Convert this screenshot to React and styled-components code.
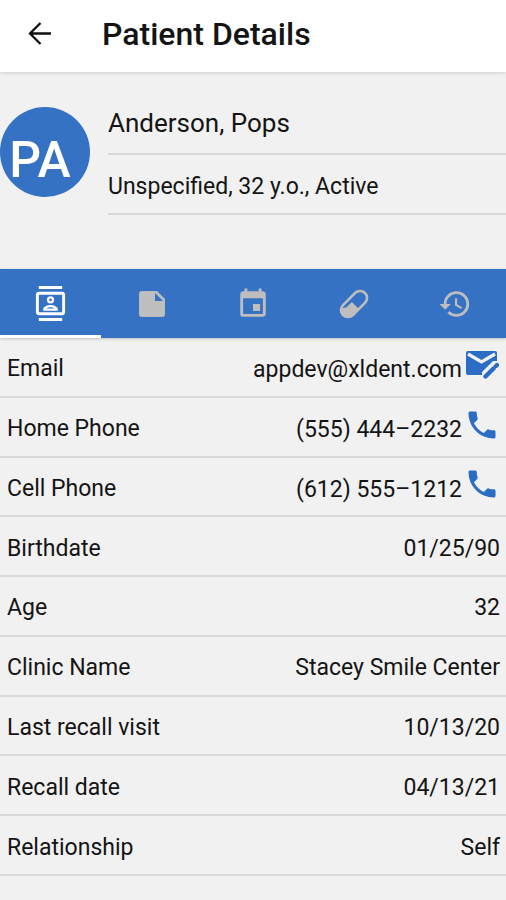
import React from 'react';
import styled, { createGlobalStyle } from 'styled-components';
import { MdOutlineContacts, MdEvent, MdHistory, MdPhone } from 'react-icons/md';

const GlobalStyle = createGlobalStyle`
  * { box-sizing: border-box; }
  body { margin: 0; background: #f1f1f1; color: #141414; font-family: Roboto, sans-serif; }
  button { font: inherit; border: 0; padding: 0; background: none; cursor: pointer; }
`;

const Page = styled.main`
  display: flex;
  flex-direction: column;
  min-height: 100vh;
`;

const AppBar = styled.header`
  display: flex;
  align-items: center;
  gap: 46px;
  height: 72px;
  padding: 0 24px 4px;
  background: #fff;
  box-shadow: 0 1px 3px rgba(0, 0, 0, 0.15);
`;

const BackButton = styled.button`
  display: flex;
  color: #111;
`;

const Title = styled.h1`
  margin: 0;
  font-size: 32px;
  font-weight: 500;
  line-height: 40px;
`;

const Summary = styled.section`
  display: flex;
  gap: 18px;
  padding: 23px 0 54px;
`;

const Avatar = styled.div`
  display: flex;
  align-items: center;
  justify-content: center;
  flex: none;
  width: 90px;
  height: 90px;
  margin-top: 12px;
  padding: 16px 10px 0 0;
  border-radius: 50%;
  background: #3572c4;
  color: #fff;
  font-size: 50px;
  font-weight: 500;
`;

const SummaryLines = styled.div`
  flex: 1;
`;

const SummaryLine = styled.div`
  display: flex;
  align-items: center;
  height: 60px;
  padding-top: ${(p) => (p.$large ? 0 : 4)}px;
  padding-bottom: ${(p) => (p.$large ? 2 : 0)}px;
  border-bottom: 2px solid #d8d8d8;
  font-size: ${(p) => (p.$large ? 26 : 23)}px;
`;

const Tabs = styled.nav`
  display: grid;
  grid-template-columns: repeat(5, 1fr);
  height: 69px;
  background: #3572c4;
  box-shadow: 0 1px 3px rgba(0, 0, 0, 0.2);
`;

const Tab = styled.button`
  display: flex;
  align-items: center;
  justify-content: center;
  color: ${(p) => (p.$active ? '#fff' : '#bebebe')};
  box-shadow: ${(p) => (p.$active ? 'inset 0 -3px #fff' : 'none')};
`;

const Details = styled.dl`
  display: grid;
  flex: 1;
  grid-auto-rows: minmax(56px, 1fr);
  margin: 0;
  padding-bottom: 24px;
`;

const Row = styled.div`
  display: flex;
  align-items: center;
  justify-content: space-between;
  padding: 4px 6px 0 7px;
  border-bottom: 2px solid #d8d8d8;
  font-size: 23px;
`;

const Value = styled.dd`
  display: flex;
  align-items: center;
  gap: 2px;
  margin: 0;
`;

const ValueText = styled.span`
  padding-top: ${(p) => (p.$lowered ? 2 : 0)}px;
`;

const ActionButton = styled.button`
  display: flex;
  justify-content: center;
  width: 36px;
  padding-bottom: 8px;
  color: #2b6cc4;
`;

const ArrowIcon = () => (
  <svg width="32" height="32" viewBox="0 0 32 32" fill="none" stroke="currentColor" strokeWidth="2.3" aria-hidden="true">
    <path d="M27 15.500H6M16.500 5L6 15.500L16.500 26" />
  </svg>
);

const NoteIcon = () => (
  <svg width="32" height="32" viewBox="0 0 32 32" fill="currentColor" aria-hidden="true">
    <path fillRule="evenodd" d="M6 3H21L29 11V26Q29 29 26 29H6Q3 29 3 26V6Q3 3 6 3ZM19 5V13H27Z" />
  </svg>
);

const PillIcon = () => (
  <svg width="32" height="32" viewBox="0 0 32 32" aria-hidden="true">
    <g transform="rotate(45 16 16)">
      <rect x="9" y="0.500" width="14" height="31" rx="7" fill="none" stroke="currentColor" strokeWidth="2.600" />
      <path d="M13 16H23V24.500A7 7 0 0 1 10 28L13 24Z" fill="currentColor" />
    </g>
  </svg>
);

const MailEditIcon = () => (
  <svg width="34" height="30" viewBox="0 0 34 30" aria-hidden="true">
    <path d="M3 1H30Q32 1 32 3V23Q32 25 30 25H3Q1 25 1 23V3Q1 1 3 1Z" fill="currentColor" />
    <path d="M3 4L16.500 12L30 4" fill="none" stroke="#f1f1f1" strokeWidth="3.200" />
    <path d="M17 30V22L28 11H34V30Z" fill="#f1f1f1" />
    <path d="M20.500 26.500L28.500 18.500M31 16L32 15" fill="none" stroke="currentColor" strokeWidth="4.400" strokeLinecap="round" />
  </svg>
);

const actions = {
  mail: { label: 'Send email', icon: <MailEditIcon /> },
  phone: { label: 'Call', icon: <MdPhone size={36} /> },
};

const rows = [
  { label: 'Email', value: 'appdev@xldent.com', action: 'mail' },
  { label: 'Home Phone', value: '(555) 444–2232', action: 'phone' },
  { label: 'Cell Phone', value: '(612) 555–1212', action: 'phone' },
  { label: 'Birthdate', value: '01/25/90' },
  { label: 'Age', value: '32' },
  { label: 'Clinic Name', value: 'Stacey Smile Center' },
  { label: 'Last recall visit', value: '10/13/20' },
  { label: 'Recall date', value: '04/13/21' },
  { label: 'Relationship', value: 'Self' },
];

export default function App() {
  return (
    <Page>
      <GlobalStyle />
      <AppBar>
        <BackButton aria-label="Back"><ArrowIcon /></BackButton>
        <Title>Patient Details</Title>
      </AppBar>
      <Summary>
        <Avatar>PA</Avatar>
        <SummaryLines>
          <SummaryLine $large>Anderson, Pops</SummaryLine>
          <SummaryLine>Unspecified, 32 y.o., Active</SummaryLine>
        </SummaryLines>
      </Summary>
      <Tabs>
        <Tab $active aria-label="Contact"><MdOutlineContacts size={35} /></Tab>
        <Tab aria-label="Notes"><NoteIcon /></Tab>
        <Tab aria-label="Appointments"><MdEvent size={34} /></Tab>
        <Tab aria-label="Medications"><PillIcon /></Tab>
        <Tab aria-label="History"><MdHistory size={34} /></Tab>
      </Tabs>
      <Details>
        {rows.map(({ label, value, action }) => (
          <Row key={label}>
            <dt>{label}</dt>
            <Value>
              <ValueText $lowered={Boolean(action)}>{value}</ValueText>
              {action && (
                <ActionButton aria-label={`${actions[action].label}: ${label}`}>
                  {actions[action].icon}
                </ActionButton>
              )}
            </Value>
          </Row>
        ))}
      </Details>
    </Page>
  );
}
